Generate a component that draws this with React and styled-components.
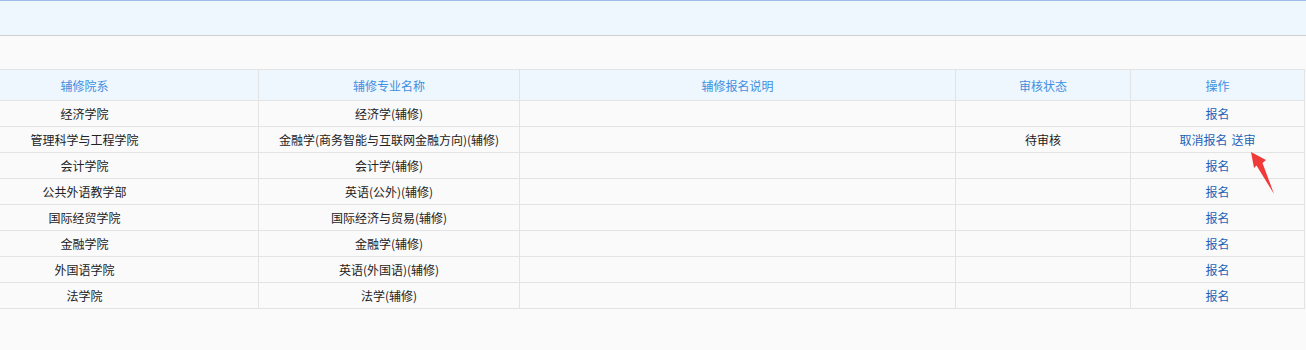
import React from 'react'
import styled, { createGlobalStyle } from 'styled-components'

const GlobalStyle = createGlobalStyle`
  body {
    margin: 0;
    background: #fafafa;
    font-family: 'Microsoft YaHei', 'Noto Sans CJK SC', 'Noto Sans', sans-serif;
    font-size: 12px;
    color: #222;
  }
`

const Page = styled.div`
  position: relative;
  width: 1306px;
  height: 350px;
  overflow: hidden;
`

const TopBand = styled.div`
  height: 34px;
  background: #eef6fe;
  border-top: 1px solid #9cbde8;
  border-bottom: 1px solid #cfcfcf;
`

const TableWrap = styled.div`
  margin-top: 33px;
  margin-left: -90px;
`

const Table = styled.table`
  border-collapse: collapse;
  table-layout: fixed;
  width: 1394px;
  th,
  td {
    border: 1px solid #e3e3e3;
    text-align: center;
    padding: 0;
    white-space: nowrap;
  }
`

const HeadCell = styled.th`
  height: 30px;
  background: #eef6fe;
  color: #3f8fe0;
  font-weight: normal;
`

const Cell = styled.td`
  height: 25px;
  background: #fafafa;
  color: #222;
`

const Link = styled.a`
  color: #1a63b8;
  text-decoration: none;
  cursor: pointer;
  & + & {
    margin-left: 4px;
  }
`

const Arrow = styled.svg`
  position: absolute;
  left: 1240px;
  top: 145px;
`

const cols = [348, 261, 436, 175, 174]
const heads = ['辅修院系', '辅修专业名称', '辅修报名说明', '审核状态', '操作']

const rows = [
  { dept: '经济学院', major: '经济学(辅修)' },
  {
    dept: '管理科学与工程学院',
    major: '金融学(商务智能与互联网金融方向)(辅修)',
    status: '待审核',
    applied: true,
  },
  { dept: '会计学院', major: '会计学(辅修)' },
  { dept: '公共外语教学部', major: '英语(公外)(辅修)' },
  { dept: '国际经贸学院', major: '国际经济与贸易(辅修)' },
  { dept: '金融学院', major: '金融学(辅修)' },
  { dept: '外国语学院', major: '英语(外国语)(辅修)' },
  { dept: '法学院', major: '法学(辅修)' },
]

export default function App() {
  return (
    <Page>
      <GlobalStyle />
      <TopBand />
      <TableWrap>
        <Table>
          <colgroup>
            {cols.map((w, i) => (
              <col key={i} style={{ width: w }} />
            ))}
          </colgroup>
          <thead>
            <tr>
              {heads.map((h) => (
                <HeadCell key={h}>{h}</HeadCell>
              ))}
            </tr>
          </thead>
          <tbody>
            {rows.map((r) => (
              <tr key={r.dept}>
                <Cell>{r.dept}</Cell>
                <Cell>{r.major}</Cell>
                <Cell />
                <Cell>{r.status}</Cell>
                <Cell>
                  {r.applied ? (
                    <>
                      <Link>取消报名</Link>
                      <Link>送审</Link>
                    </>
                  ) : (
                    <Link>报名</Link>
                  )}
                </Cell>
              </tr>
            ))}
          </tbody>
        </Table>
      </TableWrap>
      <Arrow width="40" height="56" viewBox="0 0 40 56">
        <polygon
          points="11,7 26,15 22.5,18 34,49 16.5,20.5 14,23"
          fill="#f03a3a"
        />
      </Arrow>
    </Page>
  )
}
